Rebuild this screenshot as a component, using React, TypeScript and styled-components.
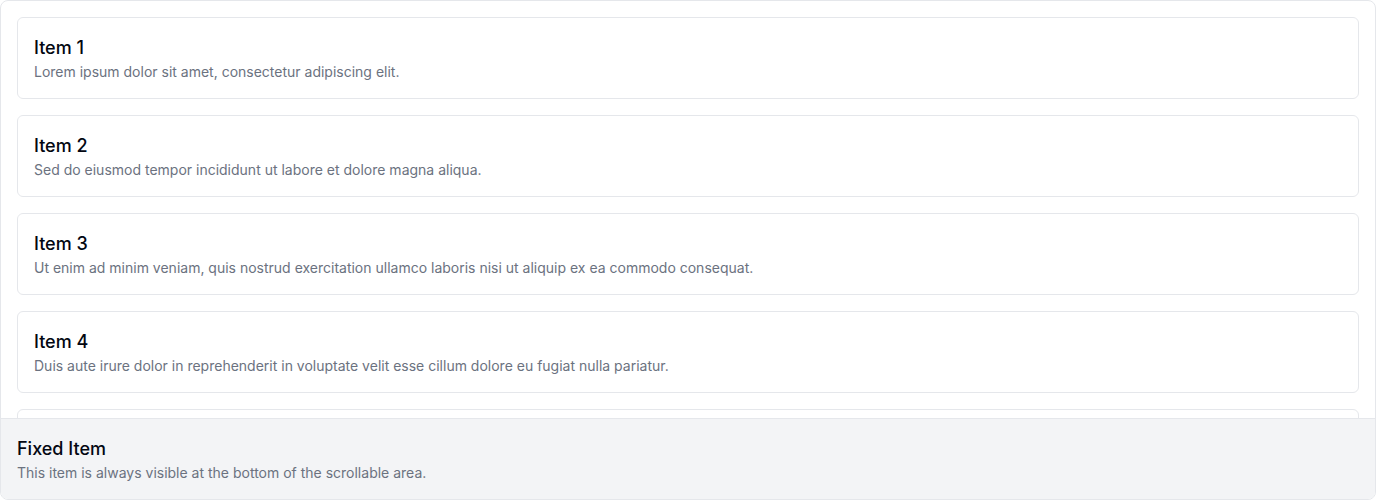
import React from "react";
import styled, { createGlobalStyle } from "styled-components";

const GlobalStyle = createGlobalStyle`
  html, body { margin: 0; padding: 0; background: #ffffff; }
  body { font-family: Inter, "Noto Sans", sans-serif; -webkit-font-smoothing: antialiased; }
  * { box-sizing: border-box; }
`;

const Frame = styled.div`
  height: 500px;
  display: flex;
  flex-direction: column;
  border: 1px solid #e5e7eb;
  border-radius: 8px;
  overflow: hidden;
  background: #ffffff;
`;

const ScrollArea = styled.div`
  flex: 1;
  min-height: 0;
  overflow: hidden;
  padding: 16px;
  display: flex;
  flex-direction: column;
  gap: 16px;
`;

const Card = styled.div`
  flex-shrink: 0;
  border: 1px solid #e5e7eb;
  border-radius: 6px;
  padding: 16px;
  background: #ffffff;
`;

const Title = styled.h3`
  margin: 0;
  font-size: 18px;
  line-height: 28px;
  font-weight: 500;
  color: #030712;
`;

const Description = styled.p`
  margin: 0;
  font-size: 14px;
  line-height: 20px;
  color: #6b7280;
`;

const Footer = styled.div`
  flex-shrink: 0;
  border-top: 1px solid #e5e7eb;
  background: #f3f4f6;
  padding: 16px;
`;

const items = [
  { title: "Item 1", text: "Lorem ipsum dolor sit amet, consectetur adipiscing elit." },
  { title: "Item 2", text: "Sed do eiusmod tempor incididunt ut labore et dolore magna aliqua." },
  { title: "Item 3", text: "Ut enim ad minim veniam, quis nostrud exercitation ullamco laboris nisi ut aliquip ex ea commodo consequat." },
  { title: "Item 4", text: "Duis aute irure dolor in reprehenderit in voluptate velit esse cillum dolore eu fugiat nulla pariatur." },
  { title: "Item 5", text: "Excepteur sint occaecat cupidatat non proident, sunt in culpa qui officia deserunt mollit anim id est laborum." },
];

export default function App() {
  return (
    <>
      <GlobalStyle />
      <Frame>
        <ScrollArea>
          {items.map((it) => (
            <Card key={it.title}>
              <Title>{it.title}</Title>
              <Description>{it.text}</Description>
            </Card>
          ))}
        </ScrollArea>
        <Footer>
          <Title>Fixed Item</Title>
          <Description>This item is always visible at the bottom of the scrollable area.</Description>
        </Footer>
      </Frame>
    </>
  );
}
